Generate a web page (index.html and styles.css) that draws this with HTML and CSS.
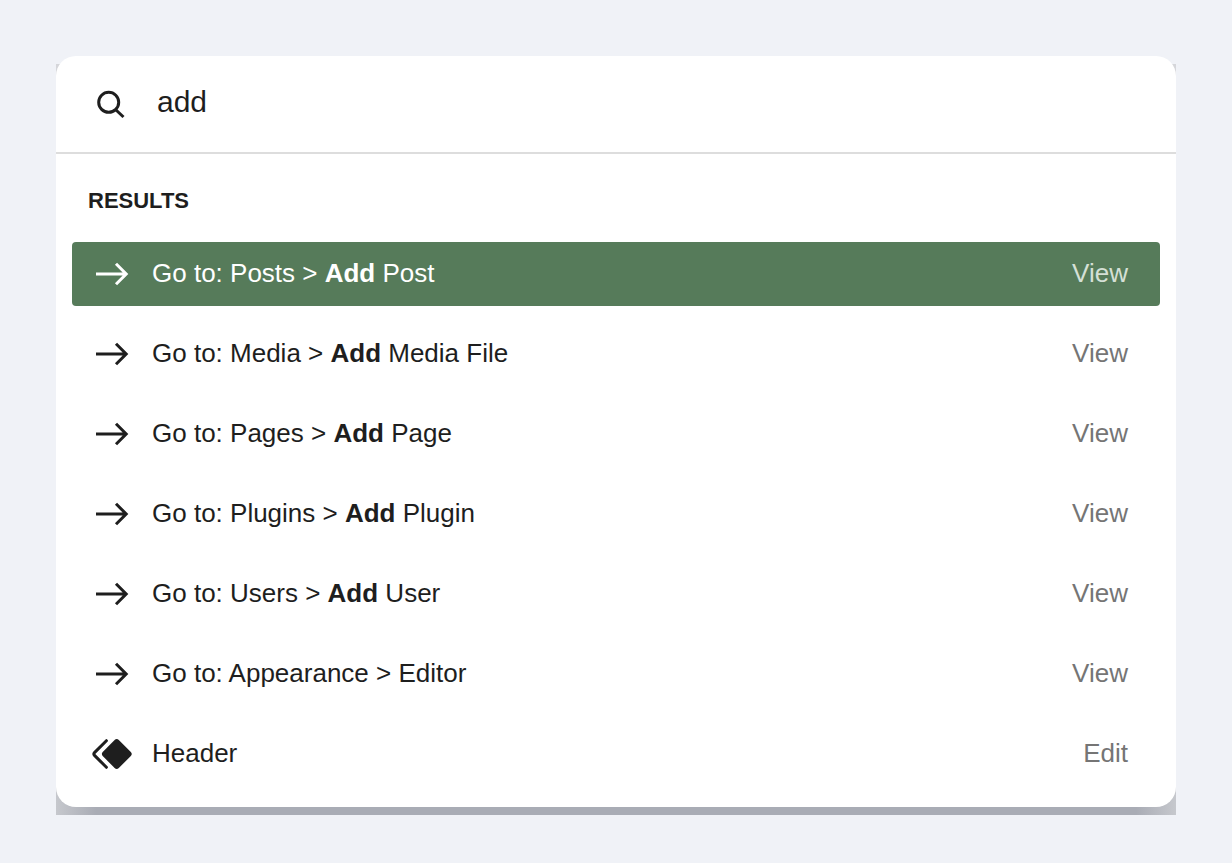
FILE: index.html
```html
<!DOCTYPE html>
<html lang="en">
<head>
<meta charset="utf-8">
<meta name="viewport" content="width=device-width, initial-scale=1">
<title>Command palette</title>
<link rel="stylesheet" href="styles.css">
</head>
<body>
<svg class="defs" aria-hidden="true">
  <symbol id="arrow" viewBox="0 0 40 40"><path d="M4 20H34M24 9.8L34.2 20L24 30.2" fill="none" stroke="currentColor" stroke-width="3"/></symbol>
</svg>
<main class="palette">
  <div class="panel">
    <label class="search">
      <svg class="search-icon" viewBox="0 0 32 32" role="img" aria-label="Search"><circle cx="13.7" cy="14.3" r="10" fill="none" stroke="currentColor" stroke-width="3"/><path d="M20.5 21.5L28.5 29" fill="none" stroke="currentColor" stroke-width="3"/></svg>
      <input class="search-input" type="text" value="add" aria-label="Search commands">
    </label>
    <h2 class="heading">RESULTS</h2>
    <ul class="results">
      <li><a class="row selected" href="#"><svg class="icon"><use href="#arrow"/></svg><span class="title">Go to: Posts &gt; <b>Add</b> Post</span><span class="action">View</span></a></li>
      <li><a class="row" href="#"><svg class="icon"><use href="#arrow"/></svg><span class="title">Go to: Media &gt; <b>Add</b> Media File</span><span class="action">View</span></a></li>
      <li><a class="row" href="#"><svg class="icon"><use href="#arrow"/></svg><span class="title">Go to: Pages &gt; <b>Add</b> Page</span><span class="action">View</span></a></li>
      <li><a class="row" href="#"><svg class="icon"><use href="#arrow"/></svg><span class="title">Go to: Plugins &gt; <b>Add</b> Plugin</span><span class="action">View</span></a></li>
      <li><a class="row" href="#"><svg class="icon"><use href="#arrow"/></svg><span class="title">Go to: Users &gt; <b>Add</b> User</span><span class="action">View</span></a></li>
      <li><a class="row" href="#"><svg class="icon"><use href="#arrow"/></svg><span class="title">Go to: Appearance &gt; Editor</span><span class="action">View</span></a></li>
      <li><a class="row" href="#"><svg class="icon" viewBox="0 0 40 40"><path d="M14.400 6.700L2.500 18.600Q1.200 20 2.500 21.400L14.400 33.300" fill="none" stroke="currentColor" stroke-width="3" stroke-linecap="round"/><path d="M22.600 6Q24.700 4.200 26.800 6L38.800 18Q40.700 20 38.800 22L26.800 34Q24.700 35.800 22.600 34L10.700 22Q9 20 10.700 18Z" fill="currentColor"/></svg><span class="title">Header</span><span class="action">Edit</span></a></li>
    </ul>
  </div>
</main>
</body>
</html>
```
FILE: styles.css
```css
* {
  box-sizing: border-box;
}

body {
  margin: 0;
  padding: 56px;
  background: #f0f2f7;
  color: #1e1e1e;
  font-family: "Liberation Sans", Arial, sans-serif;
}

.defs {
  display: none;
}

.palette {
  position: relative;
}

/* Clipped shadow below the panel */
.palette::before {
  content: "";
  position: absolute;
  inset: 8px 0 -8px;
  background:
    linear-gradient(90deg, #c6c8cd, #a9acb5 40px, #a9acb5 calc(100% - 40px), #c6c8cd) bottom / 100% 32px no-repeat,
    #d5d6da;
}

.panel {
  position: relative;
  padding-bottom: 21px;
  border-radius: 20px;
  background: #fff;
}

.search {
  display: flex;
  align-items: center;
  gap: 26px;
  height: 98px;
  padding: 0 32px 0 39px;
  border-bottom: 2px solid #ddd;
}

.search-icon {
  flex: none;
  width: 32px;
  height: 32px;
}

.search-input {
  flex: 1;
  min-width: 0;
  height: 40px;
  margin: 0 0 4px;
  padding: 0 4px;
  border: 0;
  outline: 0;
  background: transparent;
  color: inherit;
  font: 30px/40px "Liberation Sans", Arial, sans-serif;
}

.heading {
  margin: 0;
  padding: 33px 32px 27px;
  font-size: 22px;
  line-height: 28px;
}

.results {
  display: grid;
  gap: 16px;
  margin: 0;
  padding: 0 16px;
  list-style: none;
}

.row {
  display: flex;
  align-items: center;
  gap: 20px;
  height: 64px;
  padding: 0 32px 0 20px;
  border-radius: 4px;
  color: inherit;
  font-size: 26px;
  line-height: 30px;
  text-decoration: none;
}

.icon {
  flex: none;
  width: 40px;
  height: 40px;
}

.title {
  flex: 1;
  padding-bottom: 2px;
}

.action {
  padding-bottom: 2px;
  color: #757575;
}

.selected {
  background: #567b5a;
  color: #fff;
}

.selected .action {
  color: #d5e0d6;
}
```
